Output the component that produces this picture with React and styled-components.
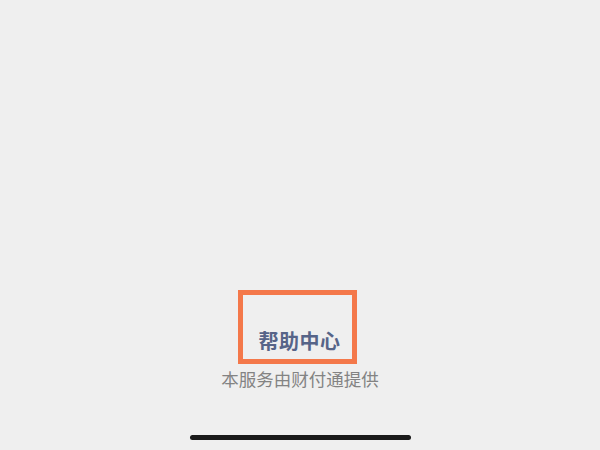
import React from "react";
import styled, { createGlobalStyle } from "styled-components";

const GlobalStyle = createGlobalStyle`
  html, body {
    margin: 0;
    padding: 0;
    background: #efefef;
  }
  body {
    font-family: "Noto Sans CJK SC", "Noto Sans", sans-serif;
  }
`;

const Page = styled.div`
  width: 600px;
  height: 450px;
  display: flex;
  flex-direction: column;
  align-items: center;
  justify-content: flex-end;
  padding-bottom: 10px;
  box-sizing: border-box;
  background: #efefef;
`;

const Highlight = styled.div`
  width: 119px;
  height: 74px;
  box-sizing: border-box;
  border: 5px solid #f4784a;
  display: flex;
  align-items: flex-end;
  justify-content: center;
  padding: 0 0 7px 4px;
  margin-left: -5px;
`;

const HelpLink = styled.span`
  font-size: 20px;
  line-height: 22px;
  font-weight: 700;
  color: #566488;
  letter-spacing: 0.5px;
`;

const Provider = styled.div`
  margin-top: 3px;
  font-size: 17.5px;
  line-height: 24px;
  color: #838383;
`;

const HomeIndicator = styled.div`
  margin-top: 44px;
  width: 221px;
  height: 5px;
  border-radius: 3px;
  background: #1a1a1a;
`;

export default function App() {
  return (
    <>
      <GlobalStyle />
      <Page>
        <Highlight>
          <HelpLink>帮助中心</HelpLink>
        </Highlight>
        <Provider>本服务由财付通提供</Provider>
        <HomeIndicator />
      </Page>
    </>
  );
}
